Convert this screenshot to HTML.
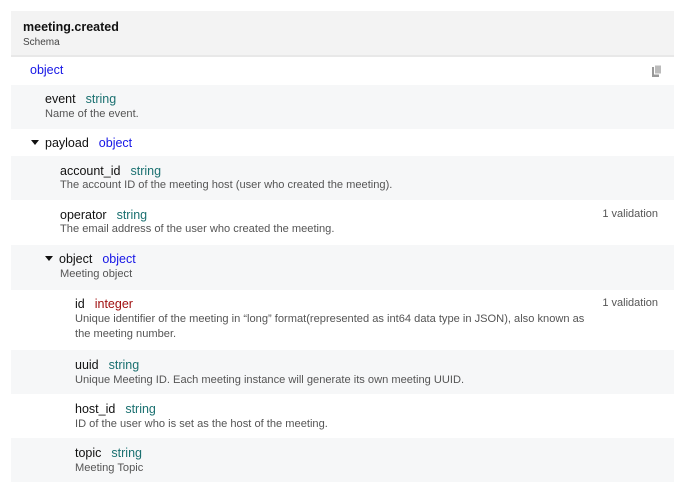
<!DOCTYPE html>
<html><head><meta charset="utf-8"><style>
body{margin:0;background:#fff;font-family:"Liberation Sans",sans-serif;width:689px;height:486px;overflow:hidden;position:relative}
.hdr{position:absolute;left:11px;top:11px;width:663px;height:44px;background:#f3f3f3;border-bottom:2px solid #e8e8e8}
.hdr b{position:absolute;left:12px;top:9px;font-size:12.5px;color:#111}
.hdr span{position:absolute;left:12px;top:26px;font-size:10px;color:#444}
.r{position:absolute;left:11px;width:663px}
.g{background:#f6f7f8}
.n{position:absolute;font-size:12.5px;color:#111;white-space:nowrap}
.t{color:#1a7070;margin-left:10px}
.o{color:#1515e6;margin-left:10px}
.i{color:#a01010;margin-left:10px}
.d{position:absolute;font-size:11.1px;color:#555;white-space:nowrap;line-height:15px}
.v{position:absolute;right:31px;font-size:11px;color:#555}
.tri{display:inline-block;width:0;height:0;border-left:4px solid transparent;border-right:4px solid transparent;border-top:5px solid #111;margin-right:6px;vertical-align:2px}
</style></head><body>
<div class="hdr"><b>meeting.created</b><span>Schema</span></div>
<div class="n" style="left:30px;top:63px;color:#1515e6">object</div>
<svg style="position:absolute;left:652px;top:65px" width="10" height="12" viewBox="0 0 10 12"><rect x="0" y="2" width="7" height="10" fill="#999"/><rect x="2.5" y="0" width="7" height="9" fill="#bbb" stroke="#fff" stroke-width="1"/></svg>

<div class="r g" style="top:85px;height:44px"></div>
<div class="n" style="left:45px;top:92px">event<span class="t">string</span></div>
<div class="d" style="left:45px;top:107px">Name of the event.</div>

<div class="n" style="left:31px;top:136px"><span class="tri"></span>payload<span class="o">object</span></div>

<div class="r g" style="top:156px;height:44px"></div>
<div class="n" style="left:60px;top:164px">account_id<span class="t">string</span></div>
<div class="d" style="left:60px;top:178px">The account ID of the meeting host (user who created the meeting).</div>

<div class="n" style="left:60px;top:208px">operator<span class="t">string</span></div>
<div class="v" style="top:208px">1 validation</div>
<div class="d" style="left:60px;top:222px">The email address of the user who created the meeting.</div>

<div class="r g" style="top:245px;height:45px"></div>
<div class="n" style="left:45px;top:252px"><span class="tri"></span>object<span class="o">object</span></div>
<div class="d" style="left:60px;top:267px">Meeting object</div>

<div class="n" style="left:75px;top:297px">id<span class="i">integer</span></div>
<div class="v" style="top:297px">1 validation</div>
<div class="d" style="left:75px;top:312px">Unique identifier of the meeting in “long” format(represented as int64 data type in JSON), also known as<br>the meeting number.</div>

<div class="r g" style="top:350px;height:44px"></div>
<div class="n" style="left:75px;top:358px">uuid<span class="t">string</span></div>
<div class="d" style="left:75px;top:373px">Unique Meeting ID. Each meeting instance will generate its own meeting UUID.</div>

<div class="n" style="left:75px;top:402px">host_id<span class="t">string</span></div>
<div class="d" style="left:75px;top:417px">ID of the user who is set as the host of the meeting.</div>

<div class="r g" style="top:438px;height:44px"></div>
<div class="n" style="left:75px;top:446px">topic<span class="t">string</span></div>
<div class="d" style="left:75px;top:461px">Meeting Topic</div>
</body></html>
